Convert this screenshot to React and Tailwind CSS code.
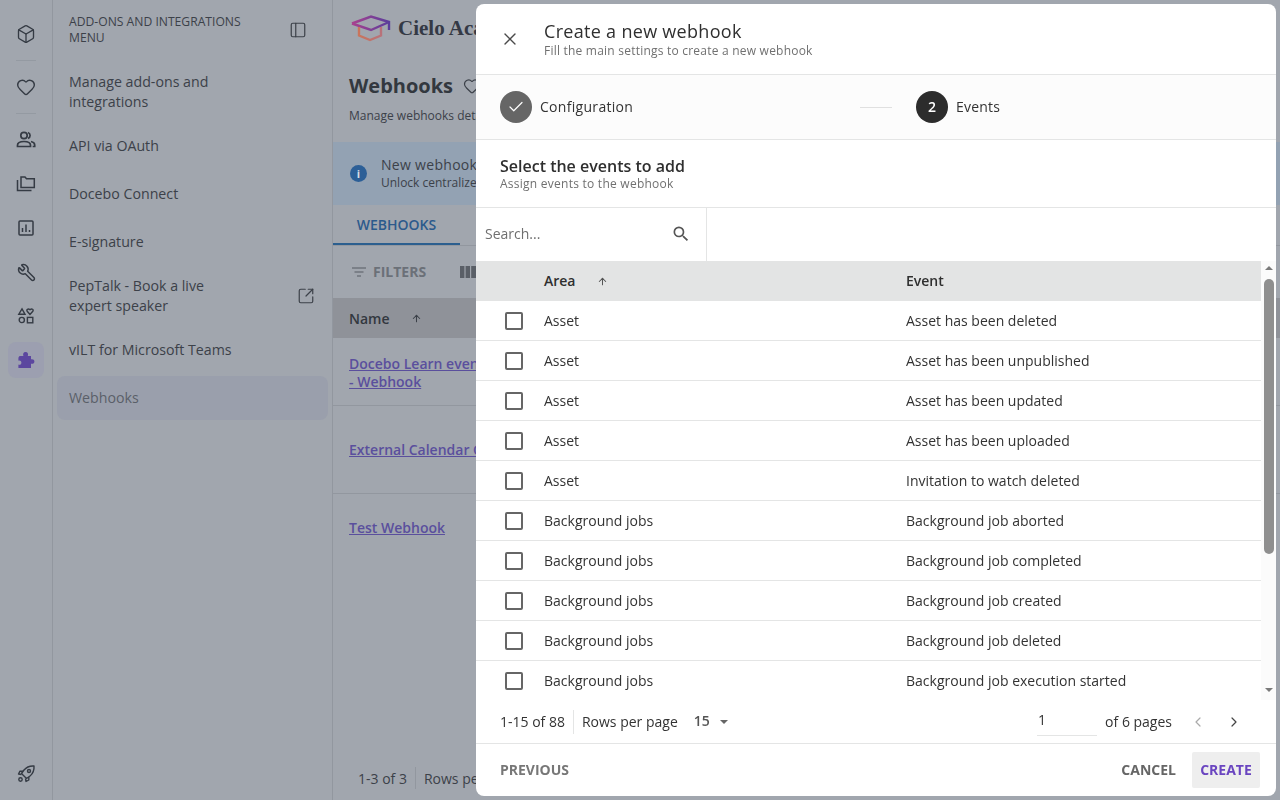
import React from "react";
import { Box, Heart, PanelLeft, Wrench, X, Check, ArrowUp, ChevronLeft, ChevronRight, SquareArrowOutUpRight } from "lucide-react";

const font = { fontFamily: '"Open Sans", sans-serif' };

const UsersIcon = () => (
  <svg width="20" height="20" viewBox="0 0 20 20" fill="none" stroke="#353b44" strokeWidth="1.7">
    <circle cx="8" cy="5.5" r="3.2" />
    <path d="M1.5 16.5v-1.2c0-2.4 2.8-3.8 6.5-3.8s6.5 1.4 6.5 3.8v1.2z" />
    <path d="M12 2.5a3.2 3.2 0 0 1 0 6" />
    <path d="M15 11.5c2.2.5 3.7 1.8 3.7 3.6v1.4h-2" />
  </svg>
);
const FoldersIcon = () => (
  <svg width="20" height="20" viewBox="0 0 20 20" fill="none" stroke="#353b44" strokeWidth="1.5">
    <path d="M5 3h4l1.5 1.8H18.3V13.5H5z" />
    <path d="M1.5 6v10.5h14" />
  </svg>
);
const ChartIcon = () => (
  <svg width="18" height="18" viewBox="0 0 18 18" fill="none" stroke="#353b44" strokeWidth="1.5">
    <rect x="2" y="2" width="14" height="14" rx="1" />
    <path d="M5.5 13V9M9 13V5.5M12.5 13v-2" />
  </svg>
);
const ShapesIcon = () => (
  <svg width="18" height="18" viewBox="0 0 18 18" fill="none" stroke="#353b44" strokeWidth="1.4">
    <path d="M5 1.8 8 7.2H1.8z" />
    <path d="M13 7.5 10.2 4.3c-1.2-1.6.9-3.2 2.8-1.6 1.9-1.6 4-.1 2.8 1.6z" />
    <circle cx="4.8" cy="13" r="2.6" />
    <rect x="10.4" y="10.4" width="5.4" height="5.4" />
  </svg>
);
const PuzzleIcon = () => (
  <svg width="18" height="18" viewBox="0 0 18 18" fill="#5c479f">
    <path d="M3 5h3.4C5.6 3 6.4 1 8.6 1s3 2 2.2 4H14v3.3c1.8-.5 3.4.3 3.4 2.2s-1.6 2.7-3.4 2.2V17H1.4v-3.4c1.6.6 3-.3 3-1.9s-1.4-2.5-3-2V8c0-1.6.4-3 1.6-3z" />
  </svg>
);
const RocketIcon = () => (
  <svg width="20" height="20" viewBox="0 0 20 20" fill="none" stroke="#353b44" strokeWidth="1.4" strokeLinejoin="round">
    <path d="M18 2c-4-.3-7.5 1-10 4L5.5 9.5l5 5L14 12c3-2.5 4.3-6 4-10z" />
    <circle cx="13" cy="7" r="1.5" />
    <path d="M7 7.2H4L2.5 10l3 .5" />
    <path d="M12.8 13v3L10 17.5l-.5-3" />
    <circle cx="4.5" cy="15.5" r="1.7" />
  </svg>
);
const SearchIcon = () => (
  <svg width="20" height="20" viewBox="0 0 24 24" fill="#555">
    <path d="M15.5 14h-.79l-.28-.27A6.471 6.471 0 0 0 16 9.5 6.5 6.5 0 1 0 9.5 16c1.61 0 3.09-.59 4.23-1.57l.27.28v.79l5 4.99L20.49 19l-4.99-5zm-6 0C7.01 14 5 11.99 5 9.5S7.01 5 9.5 5 14 7.01 14 9.5 11.99 14 9.5 14z" />
  </svg>
);
const LogoIcon = () => (
  <svg width="42" height="28" viewBox="0 0 42 28" fill="none" strokeWidth="2.4">
    <defs>
      <linearGradient id="capTop" x1="0" y1="0" x2="1" y2="0">
        <stop offset="0" stopColor="#a9418f" />
        <stop offset="1" stopColor="#5a3d9b" />
      </linearGradient>
      <linearGradient id="capBottom" x1="0" y1="0" x2="1" y2="0">
        <stop offset="0" stopColor="#c9755c" />
        <stop offset="1" stopColor="#b8727a" />
      </linearGradient>
    </defs>
    <path d="M2 9.5 21 2.5l18 5.5v8" stroke="url(#capTop)" />
    <path d="M2 9.5 21 16l18-8" stroke="url(#capTop)" />
    <path d="M9 13v8.5l11 4.5 11-4.5V13" stroke="url(#capBottom)" />
  </svg>
);
const FilterIcon = () => (
  <svg width="16" height="16" viewBox="0 0 16 16" stroke="#6f747c" strokeWidth="1.6">
    <path d="M1 4h14M3.5 8h9M6 12h4" />
  </svg>
);
const ColumnsIcon = () => (
  <svg width="16" height="14" viewBox="0 0 16 14" fill="#5a5f67">
    <rect x="0" y="1" width="4.4" height="12" />
    <rect x="5.6" y="1" width="4.4" height="12" />
    <rect x="11.2" y="1" width="4.8" height="12" />
  </svg>
);
const Caret = ({ up, color = "#6b6b6b", size = 5 }) => (
  <span
    className="block h-0 w-0"
    style={{
      borderLeftWidth: size,
      borderRightWidth: size,
      borderStyle: "solid",
      borderLeftColor: "transparent",
      borderRightColor: "transparent",
      borderTopWidth: up ? 0 : size,
      borderBottomWidth: up ? size : 0,
      borderTopColor: color,
      borderBottomColor: color,
    }}
  />
);

const rows = [
  ["Asset", "Asset has been deleted"],
  ["Asset", "Asset has been unpublished"],
  ["Asset", "Asset has been updated"],
  ["Asset", "Asset has been uploaded"],
  ["Asset", "Invitation to watch deleted"],
  ["Background jobs", "Background job aborted"],
  ["Background jobs", "Background job completed"],
  ["Background jobs", "Background job created"],
  ["Background jobs", "Background job deleted"],
  ["Background jobs", "Background job execution started"],
];

function Rail() {
  return (
    <div className="flex h-full w-[53px] shrink-0 flex-col items-center border-r border-[#92979f] pt-[14px] pb-[14px] text-[#353b44]">
      <div className="flex h-[40px] items-center justify-center"><Box size={20} strokeWidth={1.6} /></div>
      <div className="mt-[6px] mb-[6px] h-px w-[20px] bg-[#949aa2]" />
      <div className="flex h-[40px] items-center justify-center"><Heart size={20} strokeWidth={1.7} /></div>
      <div className="mt-[6px] mb-[4px] h-px w-[20px] bg-[#949aa2]" />
      <div className="flex h-[44px] items-center justify-center"><UsersIcon /></div>
      <div className="flex h-[44px] items-center justify-center"><FoldersIcon /></div>
      <div className="flex h-[44px] items-center justify-center"><ChartIcon /></div>
      <div className="flex h-[44px] items-center justify-center"><Wrench size={19} strokeWidth={1.9} className="scale-x-[-1]" /></div>
      <div className="flex h-[44px] items-center justify-center"><ShapesIcon /></div>
      <div className="mt-[4px] flex h-[36px] w-[36px] items-center justify-center rounded-[8px] bg-[#9c9fb0]"><PuzzleIcon /></div>
      <div className="mt-auto flex h-[24px] items-center justify-center"><RocketIcon /></div>
    </div>
  );
}

function SideMenu() {
  return (
    <div className="flex h-full w-[280px] shrink-0 flex-col border-r border-[#92979f] text-[14.2px] leading-[20px] text-[#3c4149]">
      <div className="flex h-[60px] items-start justify-between pl-[16px] pr-[25px] pt-[14px]">
        <div className="w-[190px] text-[12.15px] leading-[16px] uppercase">Add-ons and integrations menu</div>
        <PanelLeft size={18} strokeWidth={1.6} className="mt-[7px]" />
      </div>
      <div className="flex flex-col px-[4px]">
        <div className="flex h-[62px] items-center px-[12px] pt-[2px]"><span className="w-[170px]">Manage add-ons and integrations</span></div>
        <div className="flex h-[48px] items-center px-[12px]">API via OAuth</div>
        <div className="flex h-[48px] items-center px-[12px]">Docebo Connect</div>
        <div className="flex h-[48px] items-center px-[12px]">E-signature</div>
        <div className="flex h-[60px] items-center justify-between pl-[12px] pr-[13px]">
          <span className="w-[170px]">PepTalk - Book a live expert speaker</span>
          <SquareArrowOutUpRight size={18} strokeWidth={1.6} />
        </div>
        <div className="flex h-[48px] items-center px-[12px]">vILT for Microsoft Teams</div>
        <div className="mt-[2px] flex h-[44px] items-center rounded-[8px] bg-[#9a9fac] px-[12px] text-[#5a5f69]">Webhooks</div>
      </div>
    </div>
  );
}

function Main() {
  return (
    <div className="flex h-full min-w-0 flex-1 flex-col overflow-hidden text-[#3c4149]">
      <div className="flex h-[50px] shrink-0 items-end pl-[17px]">
        <div className="flex items-center gap-[6px] pb-[8px]">
          <LogoIcon />
          <span className="whitespace-nowrap text-[21px] leading-[24px] font-bold text-[#343945]" style={{ fontFamily: '"Liberation Serif", serif' }}>Cielo Academy</span>
        </div>
      </div>
      <div className="flex h-[50px] shrink-0 items-center gap-[10px] pl-[16px] pt-[22px]">
        <span className="text-[20px] leading-[28px] font-bold whitespace-nowrap text-[#33383f]">Webhooks</span>
        <Heart size={18} strokeWidth={1.6} className="shrink-0" />
      </div>
      <div className="mt-[8px] pl-[16px] text-[12px] leading-[16px] whitespace-nowrap">Manage webhooks details</div>
      <div className="mt-[18px] flex h-[63px] shrink-0 items-center gap-[14px] bg-[#93a2b3] pl-[17px]">
        <span className="flex h-[17px] w-[17px] shrink-0 items-center justify-center rounded-full bg-[#2c5f97] text-[11px] leading-none font-bold text-[#d7dde4]">i</span>
        <div className="whitespace-nowrap">
          <div className="text-[14px] leading-[17px] font-medium tracking-[0.3px]">New webhooks</div>
          <div className="text-[12px] leading-[19px]">Unlock centralized</div>
        </div>
      </div>
      <div className="flex h-[41px] shrink-0 border-b border-[#92979f]">
        <div className="flex w-[127px] items-center justify-center border-b-2 border-[#2c5f8f] text-[14px] font-semibold text-[#2c5a8c]">WEBHOOKS</div>
      </div>
      <div className="flex h-[52px] shrink-0 items-center pl-[18px]">
        <FilterIcon />
        <span className="ml-[6px] pb-[2px] text-[14px] font-bold text-[#6b7078]">FILTERS</span>
        <span className="ml-[34px]"><ColumnsIcon /></span>
      </div>
      <div className="flex h-[40px] shrink-0 items-center gap-[21px] bg-[#8f9299] pl-[16px]">
        <span className="text-[14px] font-semibold text-[#33383f]">Name</span>
        <ArrowUp size={11} strokeWidth={2.2} />
      </div>
      <div className="h-[68px] shrink-0 border-b border-[#92979f] pl-[16px] pt-[17px] text-[14px] leading-[18px] font-semibold whitespace-nowrap text-[#5a4f9d] underline">
        Docebo Learn events<br />- Webhook
      </div>
      <div className="flex h-[88px] shrink-0 items-center border-b border-[#92979f] pl-[16px] text-[14px] font-semibold whitespace-nowrap text-[#5a4f9d] underline">External Calendar Outlook</div>
      <div className="flex h-[68px] shrink-0 items-center pb-[2px] pl-[16px] text-[14px] font-semibold whitespace-nowrap text-[#5a4f9d] underline">Test Webhook</div>
      <div className="mt-auto flex h-[42px] shrink-0 items-center pb-[2px] pl-[25px] text-[14px] whitespace-nowrap">
        <span>1-3 of 3</span>
        <span className="ml-[8px] h-[22px] w-px bg-[#92979f]" />
        <span className="ml-[8px]">Rows per page</span>
      </div>
    </div>
  );
}

function Modal() {
  return (
    <div className="fixed top-[4px] left-[476px] flex h-[792px] w-[800px] flex-col overflow-hidden rounded-[8px] bg-white text-[#333]">
      <div className="flex h-[71px] shrink-0 items-center border-b border-[#e4e5e5] pl-[24px]">
        <X size={20} strokeWidth={1.6} className="text-[#4a4a4a]" />
        <div className="ml-[24px]">
          <div className="text-[18px] leading-[22px] font-medium tracking-[0.3px] text-[#2f2f2f]">Create a new webhook</div>
          <div className="mt-[1px] text-[12px] leading-[16px] tracking-[0.22px] text-[#707070]">Fill the main settings to create a new webhook</div>
        </div>
      </div>
      <div className="flex h-[65px] shrink-0 items-center border-b border-[#e4e5e5] bg-[#fcfcfc] pl-[24px]">
        <span className="flex h-[32px] w-[32px] items-center justify-center rounded-full bg-[#666]"><Check size={18} strokeWidth={1.6} className="text-white" /></span>
        <span className="ml-[8px] w-[320px] pb-[2px] text-[14px] font-medium tracking-[0.3px]">Configuration</span>
        <span className="h-px w-[32px] bg-[#e0e0e0]" />
        <span className="ml-[24px] flex h-[32px] w-[32px] items-center justify-center rounded-full bg-[#2c2c2c] pb-[1px] text-[14px] font-semibold text-white">2</span>
        <span className="ml-[8px] pb-[2px] text-[14px] font-medium tracking-[0.2px]">Events</span>
      </div>
      <div className="h-[68px] shrink-0 border-b border-[#e4e5e5] pl-[24px] pt-[17px]">
        <div className="text-[16px] leading-[19px] font-semibold text-[#2f2f2f]">Select the events to add</div>
        <div className="text-[12px] leading-[16px] tracking-[0.25px] text-[#707070]">Assign events to the webhook</div>
      </div>
      <div className="flex h-[53px] shrink-0">
        <div className="flex w-[231px] items-center justify-between border-r border-[#e4e5e5] pb-[2px] pl-[9px] pr-[15px] text-[14px] text-[#6f6f6f]">
          <span>Search...</span>
          <SearchIcon />
        </div>
      </div>
      <div className="flex h-[439px] shrink-0 overflow-hidden">
        <div className="w-[785px] shrink-0 text-[14px] leading-[20px]">
          <div className="flex h-[40px] items-center bg-[#e3e4e4] font-semibold text-[#2f2f2f]">
            <div className="flex w-[430px] items-center pl-[68px]">
              <span>Area</span>
              <ArrowUp size={11} strokeWidth={2.2} className="ml-[21px] text-[#555]" />
            </div>
            <div>Event</div>
          </div>
          {rows.map((r, i) => (
            <div key={i} className="flex h-[40px] items-center border-b border-[#e4e5e5] last:border-b-0">
              <div className="flex w-[430px] items-center pl-[29px]">
                <span className="h-[18px] w-[18px] rounded-[2px] border-2 border-[#666]" />
                <span className="ml-[21px]">{r[0]}</span>
              </div>
              <div>{r[1]}</div>
            </div>
          ))}
        </div>
        <div className="flex w-[15px] flex-col items-center bg-[#fbfbfb] pt-[5px] pb-[8px]">
          <Caret up size={4} color="#7a7a7a" />
          <div className="mt-[9px] h-[275px] w-[10px] rounded-[5px] bg-[#8f8f8f]" />
          <div className="mt-auto"><Caret size={4} color="#7a7a7a" /></div>
        </div>
      </div>
      <div className="flex h-[44px] shrink-0 items-center border-b border-[#e4e5e5] pl-[24px] text-[14px]">
        <span>1-15 of 88</span>
        <span className="ml-[8px] h-[24px] w-px bg-[#e4e5e5]" />
        <span className="ml-[8px]">Rows per page</span>
        <span className="ml-[16px] pb-[2px] font-semibold text-[#555]">15</span>
        <span className="ml-[10px]"><Caret size={4} color="#666" /></span>
        <span className="ml-auto flex h-[28px] w-[60px] items-center border-b border-[#e4e5e5] pl-[1px] pb-[4px]">1</span>
        <span className="ml-[8px]">of 6 pages</span>
        <ChevronLeft size={16} strokeWidth={1.8} className="ml-[18px] text-[#aaa]" />
        <ChevronRight size={16} strokeWidth={1.8} className="ml-[20px] mr-[34px] text-[#444]" />
      </div>
      <div className="flex flex-1 items-center pl-[24px] pr-[16px] text-[14px] font-bold">
        <span className="pb-[2px] text-[#777]">PREVIOUS</span>
        <span className="ml-auto pb-[2px] text-[#666]">CANCEL</span>
        <span className="ml-[16px] flex h-[36px] w-[68px] items-center justify-center rounded-[2px] bg-[#eeeeee] pb-[2px] text-[#6a45c0]">CREATE</span>
      </div>
    </div>
  );
}

export default function App() {
  return (
    <div className="relative flex h-[800px] w-[1280px] overflow-hidden bg-[#a1a6ae]" style={font}>
      <Rail />
      <SideMenu />
      <Main />
      <Modal />
    </div>
  );
}
